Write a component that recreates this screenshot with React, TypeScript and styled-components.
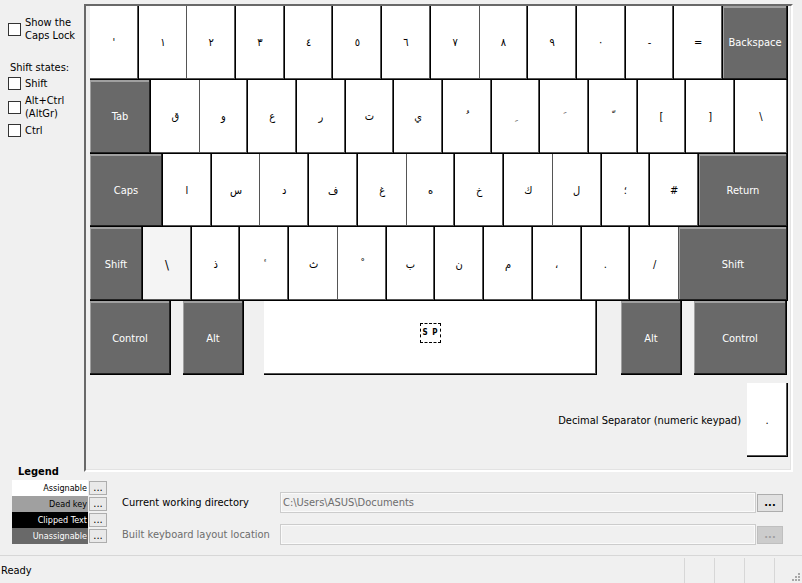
import React, { useState } from "react";
import styled, { createGlobalStyle, css } from "styled-components";

const GlobalStyle = createGlobalStyle`
  *, *::before, *::after { box-sizing: border-box; }
  html, body { margin: 0; background: #f0f0f0; }
  body, button, input {
    font-family: "DejaVu Sans Condensed", "DejaVu Sans", "Noto Sans", sans-serif;
    font-size: 11px;
    line-height: 13px;
    color: #000;
  }
`;

const Window = styled.div`
  display: flex;
  flex-direction: column;
  min-height: 100vh;
  background: #f0f0f0;
`;

const Workspace = styled.main`
  display: grid;
  grid-template-columns: 84px 1fr;
  padding: 4px 9px 0 0;
`;

const Sidebar = styled.aside`
  display: flex;
  flex-direction: column;
  align-items: flex-start;
  padding: 12px 0 0 8px;
`;

const CheckLabel = styled.label`
  display: flex;
  align-items: center;
  gap: 4px;
  white-space: pre;
`;

const CheckBox = styled.input`
  appearance: none;
  flex: none;
  width: 13px;
  height: 13px;
  margin: 0;
  border: 1px solid #333;
  background: #fff;
  &:checked { background: #333; box-shadow: inset 0 0 0 2px #fff; }
`;

const ShiftStates = styled.fieldset`
  display: flex;
  flex-direction: column;
  gap: 4px;
  margin: 19px 0 0;
  padding: 0;
  border: 0;
`;

const ShiftTitle = styled.legend`
  padding: 0 0 3px 2px;
`;

const Panel = styled.section`
  height: 468px;
  padding: 0 3px 0 4px;
  border: 2px solid;
  border-color: #696969 #fff #fff #696969;
  box-shadow: inset -1px -1px 0 #e3e3e3;
`;

const Keyboard = styled.div`
  display: grid;
  grid-template-rows: repeat(5, 1fr);
  height: 369px;
`;

const KeyRow = styled.div<{ $columns: string }>`
  display: grid;
  grid-template-columns: ${(p) => p.$columns};
`;

type Tone = "plain" | "dark" | "hover";

const tones = {
  plain: css`
    background: #fff;
    color: #000;
  `,
  hover: css`
    background: #f4f4f4;
    color: #000;
    font-size: 13px;
  `,
  dark: css`
    background: #696969;
    color: #fff;
  `,
};

const Key = styled.button<{ $tone?: Tone; $thin?: boolean }>`
  min-width: 0;
  padding: 1px 0 0;
  border: 0 solid #000;
  border-width: 0 ${(p) => (p.$thin ? 0 : 1)}px 1px 0;
  ${(p) => tones[p.$tone ?? "plain"]}
  box-shadow: inset -1px -1px 0 ${(p) => (p.$tone === "dark" ? "#222, inset 1px 2px 0 #a0a0a0" : "#555")};
`;

const Gap = styled.span``;

const SpaceMark = styled.span`
  display: inline-flex;
  justify-content: space-between;
  width: 21px;
  height: 20px;
  margin-bottom: 10px;
  padding: 0 2px;
  border: 1px dashed #000;
  font-size: 8px;
  font-weight: bold;
  line-height: 18px;
`;

const DecimalRow = styled.div`
  display: flex;
  align-items: center;
  justify-content: flex-end;
  gap: 6px;
  height: 74px;
  margin-top: 8px;
  & > button { align-self: stretch; width: 41px; }
`;

const Footer = styled.section`
  display: grid;
  grid-template-columns: 95px 1fr;
  gap: 15px;
  margin-top: -8px;
  padding: 0 19px 0 12px;
`;

const LegendTitle = styled.h2`
  margin: 0 0 0 6px;
  font-size: 11px;
  line-height: 16px;
`;

const LegendRow = styled.div`
  display: grid;
  grid-template-columns: 76px 18px;
  gap: 1px;
  align-items: center;
  height: 16px;
`;

const Swatch = styled.span<{ $bg: string; $fg: string }>`
  height: 16px;
  overflow: hidden;
  background: ${(p) => p.$bg};
  color: ${(p) => p.$fg};
  font-size: 9px;
  line-height: 16px;
  text-align: right;
  padding-right: 1px;
`;

const MoreButton = styled.button`
  height: 14px;
  padding: 0;
  border: 1px solid #adadad;
  background: #e9e9e9;
  font-size: 11px;
  line-height: 10px;
`;

const Fields = styled.div`
  display: flex;
  flex-direction: column;
  gap: 11px;
  padding-top: 28px;
`;

const Field = styled.div<{ $off?: boolean }>`
  display: grid;
  grid-template-columns: 158px 1fr 26px;
  align-items: center;
  color: ${(p) => (p.$off ? "#6d6d6d" : "#000")};
`;

const PathInput = styled.input`
  width: calc(100% - 1px);
  min-width: 0;
  height: 21px;
  padding: 0 2px;
  border: 1px solid #ccc;
  background: #f0f0f0;
  box-shadow: inset 0 0 0 1px #fafafa;
  color: #6d6d6d;
`;

const BrowseButton = styled.button`
  height: 18px;
  padding: 0;
  border: 1px solid #adadad;
  background: #e1e1e1;
  font-weight: bold;
  line-height: 16px;
  &:disabled { border-color: #bfbfbf; background: #ccc; color: #a0a0a0; }
`;

const StatusBar = styled.footer`
  display: flex;
  height: 28px;
  margin-top: auto;
  border-top: 1px solid #d7d7d7;
`;

const StatusText = styled.span`
  flex: 1;
  padding: 8px 0 0 1px;
`;

const StatusPane = styled.span`
  width: 30px;
  margin-top: 2px;
  border-left: 1px solid #d7d7d7;
`;

const GripPane = styled(StatusPane)`
  display: flex;
  align-items: flex-end;
  justify-content: flex-end;
  width: 28px;
  padding: 0 2px 2px 0;
`;

/* Combining marks sit on a no-break space so that they have a base glyph. */
const mark = (m: string) => "\u00a0" + m;

const row1 = "'١٢٣٤٥٦٧٨٩٠-=".split("");
const row2 = [
  "ق", "و", "ع", "ر", "ت", "ي",
  mark("\u064f"), mark("\u0650"), mark("\u064e"), mark("\u0651"),
  "[", "]", "\\",
];
const row3 = "اسدفغهخكل؛#".split("");
const row4 = ["ذ", mark("\u0654"), "ث", mark("\u0652"), "ب", "ن", "م", "،", ".", "/"];

function Keys({ chars, thin }: { chars: string[]; thin: number[] }) {
  return (
    <>
      {chars.map((c, i) => (
        <Key key={i} $thin={thin.includes(i)}>{c}</Key>
      ))}
    </>
  );
}

const legend = [
  ["Assignable", "#ffffff", "#000000"],
  ["Dead key", "#a0a0a0", "#000000"],
  ["Clipped Text", "#000000", "#ffffff"],
  ["Unassignable", "#696969", "#ffffff"],
];

function Check({ text }: { text: string }) {
  const [on, setOn] = useState(false);
  return (
    <CheckLabel>
      <CheckBox type="checkbox" checked={on} onChange={() => setOn(!on)} />
      {text}
    </CheckLabel>
  );
}

export default function App() {
  return (
    <Window>
      <GlobalStyle />
      <Workspace>
        <Sidebar>
          <Check text={"Show the\nCaps Lock"} />
          <ShiftStates>
            <ShiftTitle>Shift states:</ShiftTitle>
            <Check text="Shift" />
            <Check text={"Alt+Ctrl\n(AltGr)"} />
            <Check text="Ctrl" />
          </ShiftStates>
        </Sidebar>
        <Panel>
          <Keyboard>
            <KeyRow $columns="repeat(13, 1fr) 65px">
              <Keys chars={row1} thin={[1, 7]} />
              <Key $tone="dark">Backspace</Key>
            </KeyRow>
            <KeyRow $columns="61px repeat(12, 1fr) 53px">
              <Key $tone="dark">Tab</Key>
              <Keys chars={row2} thin={[0]} />
            </KeyRow>
            <KeyRow $columns="73px repeat(11, 1fr) 89px">
              <Key $tone="dark">Caps</Key>
              <Keys chars={row3} thin={[1, 4, 7]} />
              <Key $tone="dark">Return</Key>
            </KeyRow>
            <KeyRow $columns="53px repeat(11, 1fr) 109px">
              <Key $tone="dark">Shift</Key>
              <Key $tone="hover">\</Key>
              <Keys chars={row4} thin={[2, 9]} />
              <Key $tone="dark">Shift</Key>
            </KeyRow>
            <KeyRow $columns="81px 12px 61px 20px 1fr 24px 61px 12px 93px 1px">
              <Key $tone="dark">Control</Key>
              <Gap />
              <Key $tone="dark">Alt</Key>
              <Gap />
              <Key aria-label="Space">
                <SpaceMark><span>S</span><span>P</span></SpaceMark>
              </Key>
              <Gap />
              <Key $tone="dark">Alt</Key>
              <Gap />
              <Key $tone="dark">Control</Key>
            </KeyRow>
          </Keyboard>
          <DecimalRow>
            <span id="decimal-label">Decimal Separator (numeric keypad)</span>
            <Key aria-describedby="decimal-label">.</Key>
          </DecimalRow>
        </Panel>
      </Workspace>
      <Footer>
        <div>
          <LegendTitle>Legend</LegendTitle>
          {legend.map(([name, bg, fg]) => (
            <LegendRow key={name}>
              <Swatch $bg={bg} $fg={fg}>{name}</Swatch>
              <MoreButton aria-label={name + " color"}>...</MoreButton>
            </LegendRow>
          ))}
        </div>
        <Fields>
          <Field>
            <label htmlFor="cwd">Current working directory</label>
            <PathInput id="cwd" readOnly value="C:\Users\ASUS\Documents" />
            <BrowseButton aria-label="Browse working directory">...</BrowseButton>
          </Field>
          <Field $off>
            <label htmlFor="built">Built keyboard layout location</label>
            <PathInput id="built" disabled value="" />
            <BrowseButton disabled aria-label="Browse layout location">...</BrowseButton>
          </Field>
        </Fields>
      </Footer>
      <StatusBar>
        <StatusText>Ready</StatusText>
        <StatusPane />
        <StatusPane />
        <StatusPane />
        <GripPane>
          <svg width="8" height="8" viewBox="0 0 8 8" fill="#a8a8a8" aria-hidden="true">
            <path d="M6 0h2v2H6zM3 3h2v2H3zM6 3h2v2H6zM0 6h2v2H0zM3 6h2v2H3zM6 6h2v2H6z" />
          </svg>
        </GripPane>
      </StatusBar>
    </Window>
  );
}
